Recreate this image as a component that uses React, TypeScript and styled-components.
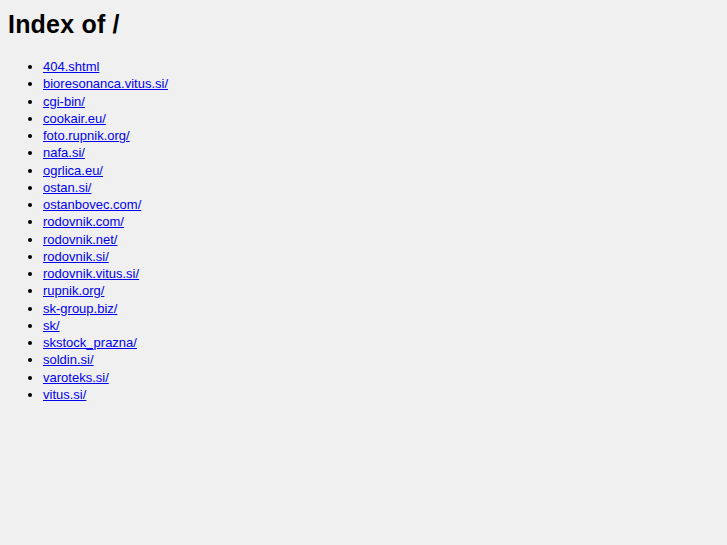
import React from "react";
import styled, { createGlobalStyle } from "styled-components";

const GlobalStyle = createGlobalStyle`
  html, body {
    background: #f0f0f0;
  }
  body {
    margin: 8px;
    font-family: "Liberation Sans", Arial, sans-serif;
    color: #000;
  }
`;

const Title = styled.h1`
  margin: 2px 0 19px;
  font-size: 25px;
  font-weight: 700;
  letter-spacing: 0.2px;
  line-height: normal;
`;

const Listing = styled.ul`
  margin: 0;
  padding-left: 35px;
  list-style: disc;
  font-size: 13px;
  line-height: 17.25px;
`;

const Entry = styled.li`
  margin: 0;
`;

const EntryLink = styled.a`
  color: #0000ee;
  text-decoration: underline;
`;

const entries = [
  "404.shtml",
  "bioresonanca.vitus.si/",
  "cgi-bin/",
  "cookair.eu/",
  "foto.rupnik.org/",
  "nafa.si/",
  "ogrlica.eu/",
  "ostan.si/",
  "ostanbovec.com/",
  "rodovnik.com/",
  "rodovnik.net/",
  "rodovnik.si/",
  "rodovnik.vitus.si/",
  "rupnik.org/",
  "sk-group.biz/",
  "sk/",
  "skstock_prazna/",
  "soldin.si/",
  "varoteks.si/",
  "vitus.si/",
];

export default function App() {
  return (
    <>
      <GlobalStyle />
      <Title>Index of /</Title>
      <Listing>
        {entries.map((name) => (
          <Entry key={name}>
            <EntryLink href={"#" + name}>{name}</EntryLink>
          </Entry>
        ))}
      </Listing>
    </>
  );
}
